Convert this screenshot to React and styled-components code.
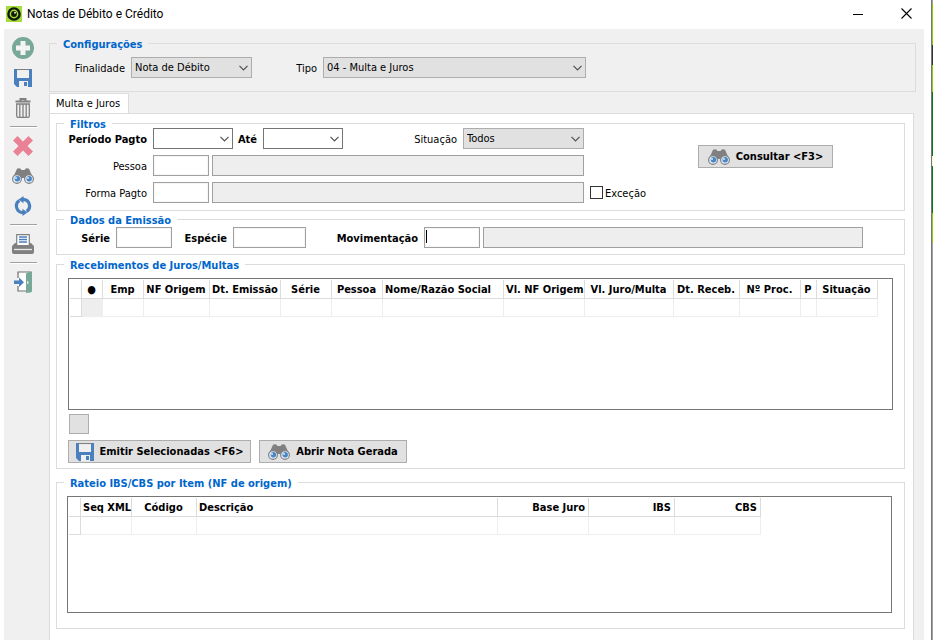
import React from 'react';
import styled, { createGlobalStyle } from 'styled-components';

const GlobalStyle = createGlobalStyle`
  * {
    box-sizing: border-box;
  }

  body {
    margin: 0;
    background: #fff;
    color: #000;
    font: 11px/14px Tahoma, 'DejaVu Sans Condensed', 'DejaVu Sans', sans-serif;
  }

  button,
  input,
  select {
    margin: 0;
    font: inherit;
    color: inherit;
    border-radius: 0;
  }
`;

const Screen = styled.div`
  display: flex;
  min-height: 100vh;
`;

const Window = styled.div`
  flex: 1;
  min-width: 0;
  display: flex;
  flex-direction: column;
  border-right: 1px solid #777;
`;

const Desktop = styled.div`
  width: 1px;
  background: linear-gradient(
    #a0a0a0 4px, #8fce00 4px 45px, #30342a 45px 65px, #8fce00 65px 92px,
    #087a12 92px 156px, #f4f8d0 156px 166px, #087a12 166px 213px,
    #8fce00 213px 243px, #a0a0a5 243px
  );
`;

const TitleBar = styled.header`
  display: flex;
  align-items: center;
  height: 29px;
  padding: 0 12px 2px 6px;
`;

const Title = styled.h1`
  flex: 1;
  margin: 0 0 0 5px;
  font: 12px/16px 'Segoe UI', Roboto, sans-serif;
`;

const WindowButton = styled.button`
  display: flex;
  justify-content: center;
  align-items: center;
  width: 24px;
  height: 24px;
  margin-left: 24px;
  padding: 0;
  border: 0;
  background: none;

  &:last-child {
    margin-right: 1px;
  }
`;

const Body = styled.div`
  flex: 1;
  display: flex;
  margin: 0 7px 0 4px;
  background: #f0f0f0;
`;

const Toolbar = styled.nav`
  width: 45px;
  padding: 4px 12px 0 6px;
`;

const ToolButton = styled.button`
  display: flex;
  justify-content: center;
  align-items: center;
  width: 26px;
  height: 30px;
  padding: 0;
  border: 0;
  background: none;
`;

const Separator = styled.hr`
  height: 2px;
  margin: 3px 0;
  border: 0;
  border-top: 1px solid #a0a0a0;
  background: #fff;
`;

const Main = styled.main`
  flex: 1;
  min-width: 0;
  display: flex;
  flex-direction: column;
  padding: 10px 8px 0 0;
`;

const Group = styled.fieldset`
  min-width: 0;
  margin: 0 0 ${({ $gap = 0 }) => $gap}px;
  padding: ${({ $padding = '0' }) => $padding};
  border: 1px solid #dcdcdc;
`;

const Legend = styled.legend`
  margin-left: ${({ $indent = 7 }) => $indent}px;
  padding: 2px 6px 0;
  font-weight: bold;
  line-height: 7px;
  color: #0066cc;
`;

const Tabs = styled.div`
  display: flex;
  margin-top: 1px;
`;

const Tab = styled.button`
  height: 21px;
  margin-bottom: -1px;
  padding: 0 8px 1px 6px;
  border: 1px solid #dcdcdc;
  border-bottom: 0;
  background: #fff;
`;

const Panel = styled.section`
  flex: 1;
  margin-right: 2px;
  padding: 5px 8px 11px 6px;
  border: 1px solid #dcdcdc;
  border-bottom: 0;
  background: #fff;
`;

const FilterBody = styled.div`
  display: flex;
  align-items: flex-start;
`;

const Rows = styled.div`
  display: flex;
  flex-direction: column;
  gap: 6px;
  width: 641px;
`;

const Row = styled.div`
  display: flex;
  align-items: center;
  height: 21px;
`;

const Label = styled.label`
  flex: none;
  width: ${({ $width }) => $width}px;
  margin-right: 6px;
  padding-top: 2px;
  text-align: right;
  white-space: nowrap;
  font-weight: ${({ $bold }) => ($bold ? 'bold' : 'normal')};
`;

const CheckLabel = styled.label`
  padding-top: 2px;
`;

const SelectWrap = styled.div`
  display: grid;
  grid-template-columns: 1fr 18px;
  align-items: center;
  width: ${({ $width }) => $width}px;
  height: 21px;

  select {
    grid-area: 1 / 1 / 2 / 3;
    width: 100%;
    height: 21px;
    padding: 0 18px 0 3px;
    appearance: none;
    border: 1px solid ${({ $light }) => ($light ? '#767676' : '#adadad')};
    background: ${({ $light }) => ($light ? '#fff' : '#e1e1e1')};
  }

  svg {
    grid-area: 1 / 2;
    justify-self: center;
    pointer-events: none;
  }
`;

const Field = styled.input`
  width: ${({ $width }) => $width}px;
  height: 21px;
  padding: 0 3px;
  border: 1px solid #a0a0a0;
  background: #fff;
  box-shadow: inset 0 0 0 1px #f6f6f6;

  &:read-only {
    margin-left: 3px;
    background: #eee;
    box-shadow: none;
  }
`;

const FocusedField = styled(Field)`
  background: linear-gradient(#000, #000) 1px 2px / 1px 13px no-repeat #fff;
`;

const Check = styled.input`
  appearance: none;
  width: 13px;
  height: 13px;
  margin: 0 2px 0 6px;
  border: 1px solid #333;
  background: #fff;

  &:checked {
    background: #333;
  }
`;

const Button = styled.button`
  display: flex;
  align-items: center;
  justify-content: center;
  gap: 6px;
  width: ${({ $width }) => $width}px;
  height: 23px;
  margin-top: ${({ $top = 0 }) => $top}px;
  padding: 1px 0 0;
  border: 1px solid #adadad;
  background: #e1e1e1;
  font-weight: bold;
  white-space: nowrap;
`;

const SquareButton = styled.button`
  display: block;
  width: 20px;
  height: 20px;
  margin: 4px 0 6px 1px;
  padding: 0;
  border: 1px solid #adadad;
  background: #e1e1e1;
`;

const Actions = styled.div`
  display: flex;
  gap: 8px;
`;

const GridBox = styled.div`
  height: ${({ $height }) => $height}px;
  padding: 1px;
  border: 1px solid #767676;
  overflow: hidden;
`;

const Table = styled.table`
  table-layout: fixed;
  width: ${({ $width }) => $width}px;
  border-collapse: separate;
  border-spacing: 0;
`;

const Th = styled.th`
  height: 19px;
  padding: 2px 3px 0 2px;
  border: 0 solid #dcdcdc;
  border-width: 0 1px 1px 0;
  text-align: ${({ $align = 'center' }) => $align};
  white-space: nowrap;
`;

const Td = styled.td`
  height: 18px;
  padding: 0;
  border: 0 solid #eee;
  border-width: 0 1px 1px 0;
  background: ${({ $shaded }) => ($shaded ? '#eee' : '#fff')};

  &:first-child {
    border-color: #dcdcdc;
  }
`;

const receiptColumns = [
  { title: '', width: 12 },
  { title: '●', width: 21, shaded: true },
  { title: 'Emp', width: 41 },
  { title: 'NF Origem', width: 66 },
  { title: 'Dt. Emissão', width: 71 },
  { title: 'Série', width: 51 },
  { title: 'Pessoa', width: 51 },
  { title: 'Nome/Razão Social', width: 121, align: 'left' },
  { title: 'Vl. NF Origem', width: 81 },
  { title: 'Vl. Juro/Multa', width: 89 },
  { title: 'Dt. Receb.', width: 66 },
  { title: 'Nº Proc.', width: 61 },
  { title: 'P', width: 16 },
  { title: 'Situação', width: 61 },
];

const itemColumns = [
  { title: '', width: 12 },
  { title: 'Seq XML', width: 51 },
  { title: 'Código', width: 65 },
  { title: 'Descrição', width: 301, align: 'left' },
  { title: 'Base Juro', width: 91, align: 'right' },
  { title: 'IBS', width: 86, align: 'right' },
  { title: 'CBS', width: 86, align: 'right' },
];

const LogoIcon = () => (
  <svg width="16" height="16" viewBox="0 0 16 16">
    <rect width="16" height="16" fill="#a5dc3c" />
    <circle cx="8" cy="8" r="5.6" fill="#a5dc3c" stroke="#10180a" strokeWidth="2.4" />
    <circle cx="8" cy="8" r="2.9" fill="#10180a" />
    <circle cx="9" cy="6.8" r="1" fill="#d8f0a8" />
  </svg>
);

const AddIcon = () => (
  <svg width="22" height="22" viewBox="0 0 22 22">
    <circle cx="11" cy="11" r="11" fill="#78a898" />
    <path d="M8.5 4h5v4.5H18v5h-4.5V18h-5v-4.5H4v-5h4.5z" fill="#f4f4f4" />
  </svg>
);

const SaveIcon = () => (
  <svg width="18" height="18" viewBox="0 0 18 18">
    <path d="M0 0h3v9h12V0h3v18H3l-3-3z" fill="#4a80bd" />
    <path d="M3 0h12v1.2H3z" fill="#808080" />
    <path d="M3 1.2h12V9H3z" fill="#f0f0f0" />
    <path d="M5 12h9v6H5z" fill="#f0f0f0" />
    <path d="M10 13h3v4h-3z" fill="#4a80bd" />
  </svg>
);

const TrashIcon = () => (
  <svg width="16" height="20" viewBox="0 0 16 20" fill="none" stroke="#808080">
    <path d="M0.5 3.5h15M5.5 3V1h5v2" strokeWidth="2" />
    <path d="M1.7 6v12q0 1.3 1.3 1.3h10q1.3 0 1.3-1.3V6zM4.8 6v13M8 6v13M11.2 6v13" strokeWidth="1.3" />
  </svg>
);

const CancelIcon = () => (
  <svg width="20" height="20" viewBox="0 0 20 20">
    <path
      d="M4.5 0L10 5.5 15.5 0 20 4.5 14.5 10l5.5 5.5-4.5 4.5-5.5-5.5L4.5 20 0 15.5 5.5 10 0 4.5z"
      fill="#e88294"
    />
  </svg>
);

const BinocularsIcon = () => (
  <svg width="22" height="16" viewBox="0 0 22 16">
    <path
      d="M5 .7Q7 0 8.7.7L9.3 2h3.4l.6-1.3Q15 0 17 .7l1 2.3 3.8 8.5L14 13l-1.8-3H9.8L8 13 .2 11.5 4 3z"
      fill="#808080"
    />
    <circle cx="5" cy="11" r="4.4" fill="#d9e6f3" stroke="#808080" strokeWidth="1.1" />
    <circle cx="17" cy="11" r="4.4" fill="#d9e6f3" stroke="#808080" strokeWidth="1.1" />
    <circle cx="5.4" cy="10.8" r="2.7" fill="#4a86c5" />
    <circle cx="17.2" cy="10.8" r="2.7" fill="#4a86c5" />
    <circle cx="4" cy="10" r="1" fill="#d9e6f3" />
    <circle cx="16" cy="10" r="1" fill="#d9e6f3" />
  </svg>
);

const RefreshIcon = () => (
  <svg width="18" height="20" viewBox="0 0 18 20">
    <path
      d="M9 3.4A6.6 6.6 0 0 1 12.6 15.5M9 16.6A6.6 6.6 0 0 1 5.4 4.5"
      fill="none"
      stroke="#4a80bd"
      strokeWidth="3.2"
    />
    <path d="M9.5 0v7.2L4.6 3.6zM8.5 20v-7.2l4.9 3.6z" fill="#4a80bd" />
  </svg>
);

const PrinterIcon = () => (
  <svg width="22" height="20" viewBox="0 0 22 20">
    <path d="M4.7 11V.7h12.6V11" fill="#fff" stroke="#808080" strokeWidth="1.2" />
    <path d="M7 3h8M7 5.5h8M7 8h8" stroke="#4a80bd" strokeWidth="1.3" />
    <path d="M3 9h2v2h12V9h2l3 3v6q0 2-2 2H2q-2 0-2-2v-6z" fill="#808080" />
    <path d="M2 15.5h18" stroke="#e8e8e8" strokeWidth="1.3" />
  </svg>
);

const ExitIcon = () => (
  <svg width="18" height="22" viewBox="0 0 18 22">
    <path d="M4 7V1h12v19H4v-5" fill="#fff" stroke="#707070" strokeWidth="1.2" />
    <path d="M12 2.5L16.5 .5H18v20l-1.5 1-4.5.5z" fill="#78a898" />
    <path d="M13.8 10v3" stroke="#fff" />
    <path d="M0 9.5h5V6.5l5 4.8-5 4.8v-3H0z" fill="#4a80bd" />
  </svg>
);

const ChevronIcon = () => (
  <svg width="9" height="6" viewBox="0 0 9 6" fill="none" stroke="#505050">
    <path d="M.5.8l4 4 4-4" strokeWidth="1.2" />
  </svg>
);

const Select = ({ id, width, options, light }) => (
  <SelectWrap $width={width} $light={light}>
    <select id={id}>
      {options.map((option) => (
        <option key={option}>{option}</option>
      ))}
    </select>
    <ChevronIcon />
  </SelectWrap>
);

const DataGrid = ({ columns, height }) => (
  <GridBox $height={height}>
    <Table $width={columns.reduce((sum, { width }) => sum + width, 0)}>
      <colgroup>
        {columns.map(({ title, width }) => (
          <col key={title} style={{ width }} />
        ))}
      </colgroup>
      <thead>
        <tr>
          {columns.map(({ title, align }) => (
            <Th key={title} $align={align}>{title}</Th>
          ))}
        </tr>
      </thead>
      <tbody>
        <tr>
          {columns.map(({ title, shaded }) => (
            <Td key={title} $shaded={shaded} />
          ))}
        </tr>
      </tbody>
    </Table>
  </GridBox>
);

const App = () => (
  <Screen>
    <GlobalStyle />
    <Window>
      <TitleBar>
        <LogoIcon />
        <Title>Notas de Débito e Crédito</Title>
        <WindowButton aria-label="Minimizar">
          <svg width="10" height="11" viewBox="0 0 10 11" stroke="#000">
            <path d="M0 6.5h10" />
          </svg>
        </WindowButton>
        <WindowButton aria-label="Fechar">
          <svg width="11" height="11" viewBox="0 0 11 11" stroke="#000">
            <path d="M.5.5l10 10M10.5.5l-10 10" strokeWidth="1.1" />
          </svg>
        </WindowButton>
      </TitleBar>
      <Body>
        <Toolbar>
          <ToolButton aria-label="Novo"><AddIcon /></ToolButton>
          <ToolButton aria-label="Salvar"><SaveIcon /></ToolButton>
          <ToolButton aria-label="Excluir"><TrashIcon /></ToolButton>
          <Separator />
          <ToolButton aria-label="Cancelar"><CancelIcon /></ToolButton>
          <ToolButton aria-label="Pesquisar"><BinocularsIcon /></ToolButton>
          <ToolButton aria-label="Atualizar"><RefreshIcon /></ToolButton>
          <Separator />
          <ToolButton aria-label="Imprimir"><PrinterIcon /></ToolButton>
          <Separator />
          <ToolButton aria-label="Sair"><ExitIcon /></ToolButton>
        </Toolbar>
        <Main>
          <Group $padding="9px 0 13px">
            <Legend>Configurações</Legend>
            <Row>
              <Label htmlFor="finalidade" $width={75}>Finalidade</Label>
              <Select id="finalidade" width={121} options={['Nota de Débito', 'Nota de Crédito']} />
              <Label htmlFor="tipo" $width={65}>Tipo</Label>
              <Select id="tipo" width={263} options={['04 - Multa e Juros']} />
            </Row>
          </Group>
          <Tabs>
            <Tab>Multa e Juros</Tab>
          </Tabs>
          <Panel>
            <Group $gap={4} $padding="0 0 7px">
              <Legend>Filtros</Legend>
              <FilterBody>
                <Rows>
                  <Row>
                    <Label htmlFor="inicio" $width={90} $bold>Período Pagto</Label>
                    <Select id="inicio" width={80} options={['']} light />
                    <Label htmlFor="fim" $width={24} $bold>Até</Label>
                    <Select id="fim" width={80} options={['']} light />
                    <Label htmlFor="situacao" $width={114}>Situação</Label>
                    <Select id="situacao" width={121} options={['Todos']} />
                  </Row>
                  <Row>
                    <Label htmlFor="pessoa" $width={90}>Pessoa</Label>
                    <Field id="pessoa" $width={56} />
                    <Field aria-label="Nome da pessoa" $width={372} readOnly />
                  </Row>
                  <Row>
                    <Label htmlFor="forma" $width={90}>Forma Pagto</Label>
                    <Field id="forma" $width={56} />
                    <Field aria-label="Descrição da forma" $width={372} readOnly />
                    <Check id="excecao" type="checkbox" />
                    <CheckLabel htmlFor="excecao">Exceção</CheckLabel>
                  </Row>
                </Rows>
                <Button $width={135} $top={17}>
                  <BinocularsIcon />
                  {'Consultar <F3>'}
                </Button>
              </FilterBody>
            </Group>
            <Group $gap={5} $padding="3px 0 6px">
              <Legend>Dados da Emissão</Legend>
              <Row>
                <Label htmlFor="serie" $width={53} $bold>Série</Label>
                <Field id="serie" $width={56} />
                <Label htmlFor="especie" $width={55} $bold>Espécie</Label>
                <Field id="especie" $width={73} />
                <Label htmlFor="movimentacao" $width={112} $bold>Movimentação</Label>
                <FocusedField id="movimentacao" $width={56} />
                <Field aria-label="Descrição da movimentação" $width={380} readOnly />
              </Row>
            </Group>
            <Group $gap={9} $padding="9px 11px 5px">
              <Legend $indent={-4}>Recebimentos de Juros/Multas</Legend>
              <DataGrid columns={receiptColumns} height={132} />
              <SquareButton aria-label="Selecionar todos" />
              <Actions>
                <Button $width={183}>
                  <SaveIcon />
                  {'Emitir Selecionadas <F6>'}
                </Button>
                <Button $width={148}>
                  <BinocularsIcon />
                  Abrir Nota Gerada
                </Button>
              </Actions>
            </Group>
            <Group $padding="9px 12px 15px 10px">
              <Legend $indent={-3}>Rateio IBS/CBS por Item (NF de origem)</Legend>
              <DataGrid columns={itemColumns} height={117} />
            </Group>
          </Panel>
        </Main>
      </Body>
    </Window>
    <Desktop />
  </Screen>
);

export default App;
